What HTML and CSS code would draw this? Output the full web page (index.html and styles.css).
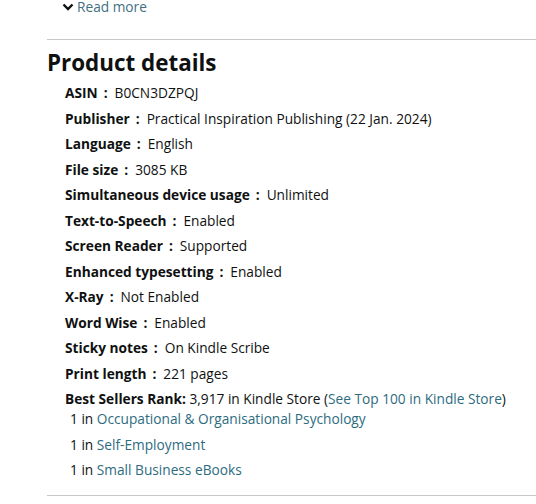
FILE: index.html
```html
<!doctype html>
<html lang="en">

<head>
  <meta charset="UTF-8">
  <meta name="viewport" content="width=device-width, initial-scale=1.0">
  <title>Product details</title>
  <link rel="stylesheet" href="styles.css">
</head>

<body>
  <div class="read-more">
    <a href="#" class="expander">
      <svg class="chevron" width="12" height="8" viewBox="0 0 12 8"><path d="M1.5 1.5 L6 6 L10.5 1.5" fill="none" stroke="#0F1111" stroke-width="2.4"/></svg>
      Read more
    </a>
  </div>

  <section class="details">
    <h2>Product details</h2>
    <ul class="detail-list">
      <li><span class="label">ASIN</span><span class="colon">:</span>B0CN3DZPQJ</li>
      <li><span class="label">Publisher</span><span class="colon">:</span>Practical Inspiration Publishing (22 Jan. 2024)</li>
      <li><span class="label">Language</span><span class="colon">:</span>English</li>
      <li><span class="label">File size</span><span class="colon">:</span>3085 KB</li>
      <li><span class="label">Simultaneous device usage</span><span class="colon">:</span>Unlimited</li>
      <li><span class="label">Text-to-Speech</span><span class="colon">:</span>Enabled</li>
      <li><span class="label">Screen Reader</span><span class="colon">:</span>Supported</li>
      <li><span class="label">Enhanced typesetting</span><span class="colon">:</span>Enabled</li>
      <li><span class="label">X-Ray</span><span class="colon">:</span>Not Enabled</li>
      <li><span class="label">Word Wise</span><span class="colon">:</span>Enabled</li>
      <li><span class="label">Sticky notes</span><span class="colon">:</span>On Kindle Scribe</li>
      <li><span class="label">Print length</span><span class="colon">:</span>221 pages</li>
    </ul>
    <div class="rank">
      <b>Best Sellers Rank:</b> 3,917 in Kindle Store (<a href="#">See Top 100 in Kindle Store</a>)
      <ul class="rank-list">
        <li>1 in <a href="#">Occupational &amp; Organisational Psychology</a></li>
        <li>1 in <a href="#">Self-Employment</a></li>
        <li>1 in <a href="#">Small Business eBooks</a></li>
      </ul>
    </div>
  </section>
</body>
</html>
```

FILE: styles.css
```css
body {
  margin: 0;
  font-family: "Open Sans", "Noto Sans", Arial, sans-serif;
  font-size: 13.7px;
  color: #0F1111;
  background: #fff;
}

a {
  color: #2D6B80;
  text-decoration: none;
}

.read-more {
  padding: 0 0 0 62px;
  height: 14px;
  line-height: 14px;
  margin-top: -1px;
}

.expander {
  display: inline-flex;
  align-items: center;
  gap: 3px;
  color: #3F6F80;
}

.details {
  margin: 26px 0 0 47px;
  border-top: 1px solid #c8c8c8;
  border-bottom: 1px solid #c8c8c8;
  padding-bottom: 9px;
}

.details h2 {
  margin: 9px 0 6px;
  font-size: 22.4px;
  line-height: 28px;
  font-weight: 700;
}

.detail-list {
  list-style: none;
  margin: 0;
  padding: 0 0 0 18px;
}

.detail-list li {
  line-height: 20px;
  margin-bottom: 5.5px;
}

.label {
  font-weight: 700;
}

.colon {
  font-weight: 700;
  margin: 0 7px 0 6px;
}

.rank {
  padding-left: 18px;
  line-height: 20px;
  margin-top: 1px;
}

.rank b {
  font-weight: 700;
}

.rank-list {
  list-style: none;
  margin: 0;
  padding: 0 0 0 5px;
}

.rank-list li {
  margin-bottom: 5.5px;
}
```
